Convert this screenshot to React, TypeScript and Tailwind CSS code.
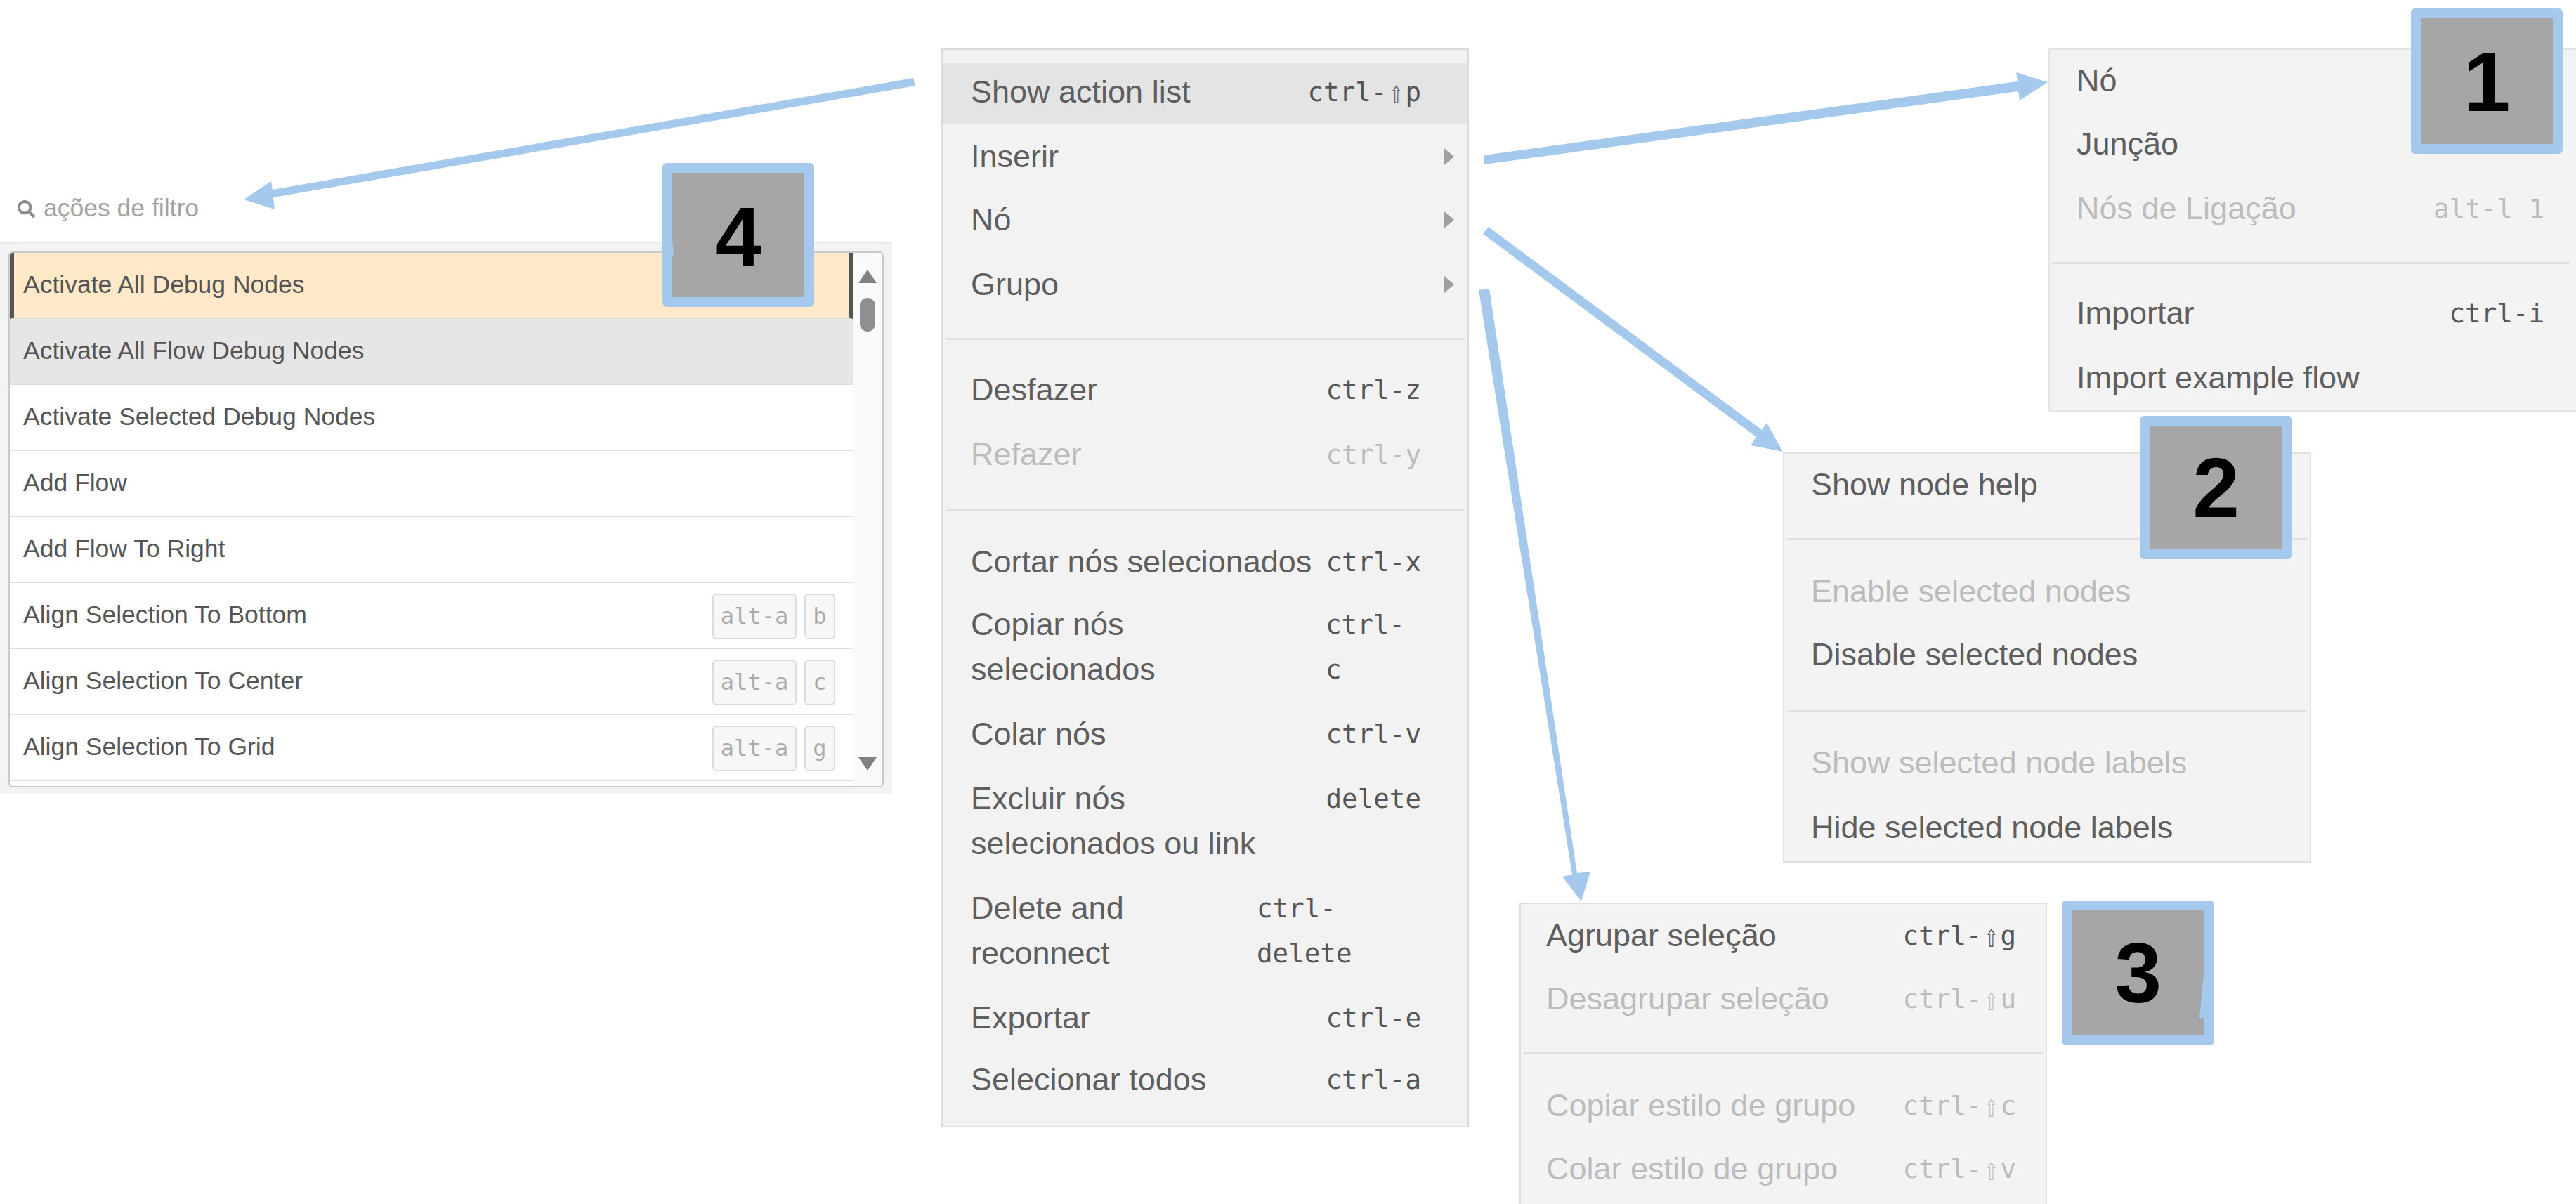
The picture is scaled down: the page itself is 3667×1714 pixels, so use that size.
import React from 'react';
import { FaSearch } from 'react-icons/fa';

const mono = "font-['DejaVu_Sans_Mono',monospace]";

// the shift glyph is drawn tall and narrow in the original menus
const Shift = () => (
  <span className="inline-block w-[26px] text-center text-[46px] leading-[40px] scale-x-[0.7] align-[-3px]">⇧</span>
);

const MenuRow = ({ label, keys, disabled = false, arrow = false, className = '' }: any) => (
  <div className={`flex justify-between items-start py-[14px] leading-[64px] text-[45px] ${disabled ? 'text-[#bcbcbc]' : 'text-[#5e5e5e]'} ${className}`}>
    <span>{label}</span>
    {keys && <span className={`${mono} text-[37.5px] ${disabled ? 'text-[#bdbdbd]' : 'text-[#555]'}`}>{keys}</span>}
    {arrow && (
      <svg className="absolute right-[19px] mt-[20px]" width="14" height="24" viewBox="0 0 14 24">
        <polygon points="0,0 14,12 0,24" fill="#a0a0a0" />
      </svg>
    )}
  </div>
);

const NumberBox = ({ n, className }: any) => (
  <div className={`absolute flex items-center justify-center border-[14px] border-[#a5c9ec] rounded-[6px] bg-[#a6a6a6] text-[120px] font-bold text-black leading-none ${className}`}>
    {n}
  </div>
);

const KeyCap = ({ k, className }: any) => (
  <span className={`flex items-center justify-center h-[65px] border-2 border-[#dcdcdc] rounded-[6px] bg-[#f7f7f7] text-[32px] text-[#aaa] ${mono} ${className}`}>{k}</span>
);

const actions = [
  { label: 'Activate All Debug Nodes', cls: 'bg-[#ffe9c8] border-x-[6px] border-x-[#555] pl-[13px]' },
  { label: 'Activate All Flow Debug Nodes', cls: 'bg-[#e6e6e6] pl-[19px]' },
  { label: 'Activate Selected Debug Nodes', cls: 'pl-[19px]' },
  { label: 'Add Flow', cls: 'pl-[19px]' },
  { label: 'Add Flow To Right', cls: 'pl-[19px]' },
  { label: 'Align Selection To Bottom', cls: 'pl-[19px]', k: 'b' },
  { label: 'Align Selection To Center', cls: 'pl-[19px]', k: 'c' },
  { label: 'Align Selection To Grid', cls: 'pl-[19px]', k: 'g' },
];

const ActionList = () => (
  <div className="absolute left-0 top-[270px] w-[1270px]">
    <div className="flex items-center gap-[12px] h-[74px] pb-[20px] pl-[25px] text-[35.5px] text-[#a3a3a3]">
      <FaSearch className="w-[25px] h-[25px] text-[#8a8a8a]" />
      <span>ações de filtro</span>
    </div>
    <div className="h-[786px] bg-[#f3f3f3] border-t-2 border-[#e4e4e4] pt-[12px] pl-[12px] pr-[12px] pb-[9px]">
      <div className="flex h-full bg-white border-2 border-[#c9c9c9] rounded-[6px] overflow-hidden">
        <div className="w-[1200px] flex flex-col">
          {actions.map((a) => (
            <div key={a.label} className={`flex items-center justify-between shrink-0 h-[94px] border-b-2 border-[#dedede] pr-[25px] text-[35.5px] text-[#555] ${a.cls}`}>
              <span>{a.label}</span>
              {a.k && (
                <span className="flex gap-[11px] mt-[2px]">
                  <KeyCap k="alt-a" className="w-[120px]" />
                  <KeyCap k={a.k} className="w-[44px]" />
                </span>
              )}
            </div>
          ))}
        </div>
        <div className="flex-1 flex flex-col items-center bg-[#fafafa] pt-[24px]">
          <svg width="26" height="19" viewBox="0 0 26 19"><polygon points="13,0 26,19 0,19" fill="#808080" /></svg>
          <div className="w-[22px] h-[48px] mt-[21px] rounded-full bg-[#8f8f8f]" />
          <svg className="mt-[606px]" width="26" height="19" viewBox="0 0 26 19"><polygon points="0,0 26,0 13,19" fill="#808080" /></svg>
        </div>
      </div>
    </div>
  </div>
);

const MainMenu = () => (
  <div className="absolute left-[1340px] top-[69px] w-[751px] h-[1536px] bg-[#f2f2f2] border-2 border-[#dcdcdc] pt-[18px]">
    <MenuRow label="Show action list" keys={<>ctrl-<Shift />p</>} className="bg-[#e4e4e4] pl-[40px] pr-[66px] pt-[10px] pb-[14px]" />
    <MenuRow label="Inserir" arrow className="pl-[40px] pr-[66px] -mb-[2px]" />
    <MenuRow label="Nó" arrow className="pl-[40px] pr-[66px]" />
    <MenuRow label="Grupo" arrow className="pl-[40px] pr-[66px]" />
    <div className="h-[3px] bg-[#e0e0e0] mx-[5px] mt-[30px] mb-[25px]" />
    <MenuRow label="Desfazer" keys="ctrl-z" className="pl-[40px] pr-[66px]" />
    <MenuRow label="Refazer" keys="ctrl-y" disabled className="pl-[40px] pr-[66px]" />
    <div className="h-[3px] bg-[#e0e0e0] mx-[5px] mt-[31px] mb-[27px]" />
    <MenuRow label="Cortar nós selecionados" keys="ctrl-x" className="pl-[40px] pr-[66px] -mb-[4px]" />
    <MenuRow
      label={<>Copiar nós<br />selecionados</>}
      keys={<span className="block w-[136px]">ctrl-<br />c</span>}
      className="pl-[40px] pr-[66px] mt-[1px]"
    />
    <MenuRow label="Colar nós" keys="ctrl-v" className="pl-[40px] pr-[66px]" />
    <MenuRow
      label={<>Excluir nós<br />selecionados ou link</>}
      keys="delete"
      className="pl-[40px] pr-[66px]"
    />
    <MenuRow
      label={<>Delete and<br />reconnect</>}
      keys={<span className="block w-[234px]">ctrl-<br />delete</span>}
      className="pl-[40px] pr-[66px]"
    />
    <MenuRow label="Exportar" keys="ctrl-e" className="pl-[40px] pr-[66px] -mb-[4px]" />
    <MenuRow label="Selecionar todos" keys="ctrl-a" className="pl-[40px] pr-[66px]" />
  </div>
);

const InsertMenu = () => (
  <div className="absolute left-[2916px] top-[69px] w-[751px] h-[517px] bg-[#f3f3f3] border-2 border-r-0 border-[#e4e4e4]">
    <MenuRow label="Nó" className="pl-[38px] pr-[45px] -mt-[2px] -mb-[2px]" />
    <MenuRow label="Junção" className="pl-[38px] pr-[45px]" />
    <MenuRow label="Nós de Ligação" keys="alt-l 1" disabled className="pl-[38px] pr-[45px]" />
    <div className="h-[3px] bg-[#e0e0e0] ml-[3px] mr-[9px] mt-[30px] mb-[24px]" />
    <MenuRow label="Importar" keys="ctrl-i" className="pl-[38px] pr-[45px]" />
    <MenuRow label="Import example flow" className="pl-[38px] pr-[45px]" />
  </div>
);

const NodeMenu = () => (
  <div className="absolute left-[2538px] top-[644px] w-[752px] h-[584px] bg-[#f3f3f3] border-2 border-[#e0e0e0]">
    <MenuRow label="Show node help" className="pl-[38px] -mt-[2px]" />
    <div className="h-[3px] bg-[#e0e0e0] mx-[4px] mt-[30px] mb-[27px]" />
    <MenuRow label="Enable selected nodes" disabled className="pl-[38px] -mb-[2px]" />
    <MenuRow label="Disable selected nodes" className="pl-[38px]" />
    <div className="h-[3px] bg-[#e0e0e0] mx-[4px] mt-[33px] mb-[26px]" />
    <MenuRow label="Show selected node labels" disabled className="pl-[38px]" />
    <MenuRow label="Hide selected node labels" className="pl-[38px]" />
  </div>
);

const GroupMenu = () => (
  <div className="absolute left-[2163px] top-[1285px] w-[751px] h-[429px] bg-[#f3f3f3] border-2 border-b-0 border-[#dedede] overflow-hidden">
    <MenuRow label="Agrupar seleção" keys={<>ctrl-<Shift />g</>} className="pl-[36px] pr-[42px] -mt-[1px] -mb-[2px]" />
    <MenuRow label="Desagrupar seleção" keys={<>ctrl-<Shift />u</>} disabled className="pl-[36px] pr-[42px]" />
    <div className="h-[3px] bg-[#e0e0e0] mx-[4px] mt-[30px] mb-[27px]" />
    <MenuRow label="Copiar estilo de grupo" keys={<>ctrl-<Shift />c</>} disabled className="pl-[36px] pr-[42px] -mb-[2px]" />
    <MenuRow label="Colar estilo de grupo" keys={<>ctrl-<Shift />v</>} disabled className="pl-[36px] pr-[42px]" />
  </div>
);

export default function App() {
  return (
    <div className="relative w-[3667px] h-[1714px] bg-white overflow-hidden font-['Liberation_Sans',Arial,sans-serif]">
      <ActionList />
      <MainMenu />
      <InsertMenu />
      <NodeMenu />
      <GroupMenu />

      {/* arrows between the menus */}
      <svg className="absolute inset-0 pointer-events-none" width="3667" height="1714" viewBox="0 0 3667 1714">
        <g fill="#a5c9ec" stroke="none">
          <polygon points="2112,221 2872,116 2870,103 2915,117 2875,143 2873,130 2113,234" />
          <polygon points="2119,323 2508,612 2515,602 2538,643 2492,634 2500,622 2111,333" />
          <polygon points="2105,413 2120,411 2245,1243 2264,1241 2251,1283 2224,1248 2238,1245" />
          <polygon points="1300,111 1303,122 389,281 391,298 347,284 386,258 388,270" />
        </g>
      </svg>

      <NumberBox n="1" className="left-[3432px] top-[12px] w-[216px] h-[207px]" />
      <NumberBox n="2" className="left-[3046px] top-[592px] w-[217px] h-[204px]" />
      <NumberBox n="3" className="left-[2935px] top-[1282px] w-[217px] h-[206px]" />
      <NumberBox n="4" className="left-[943px] top-[232px] w-[216px] h-[205px] pt-[4px]" />

      {/* leftovers of the arrows showing through the boxes */}
      <svg className="absolute inset-0 pointer-events-none" width="3667" height="1714" viewBox="0 0 3667 1714">
        <polygon points="3139,1367 3131,1449 3139,1449" fill="#a5c9ec" />
        <polygon points="955,315 959,364 955,364" fill="#a5c9ec" />
      </svg>
    </div>
  );
}
